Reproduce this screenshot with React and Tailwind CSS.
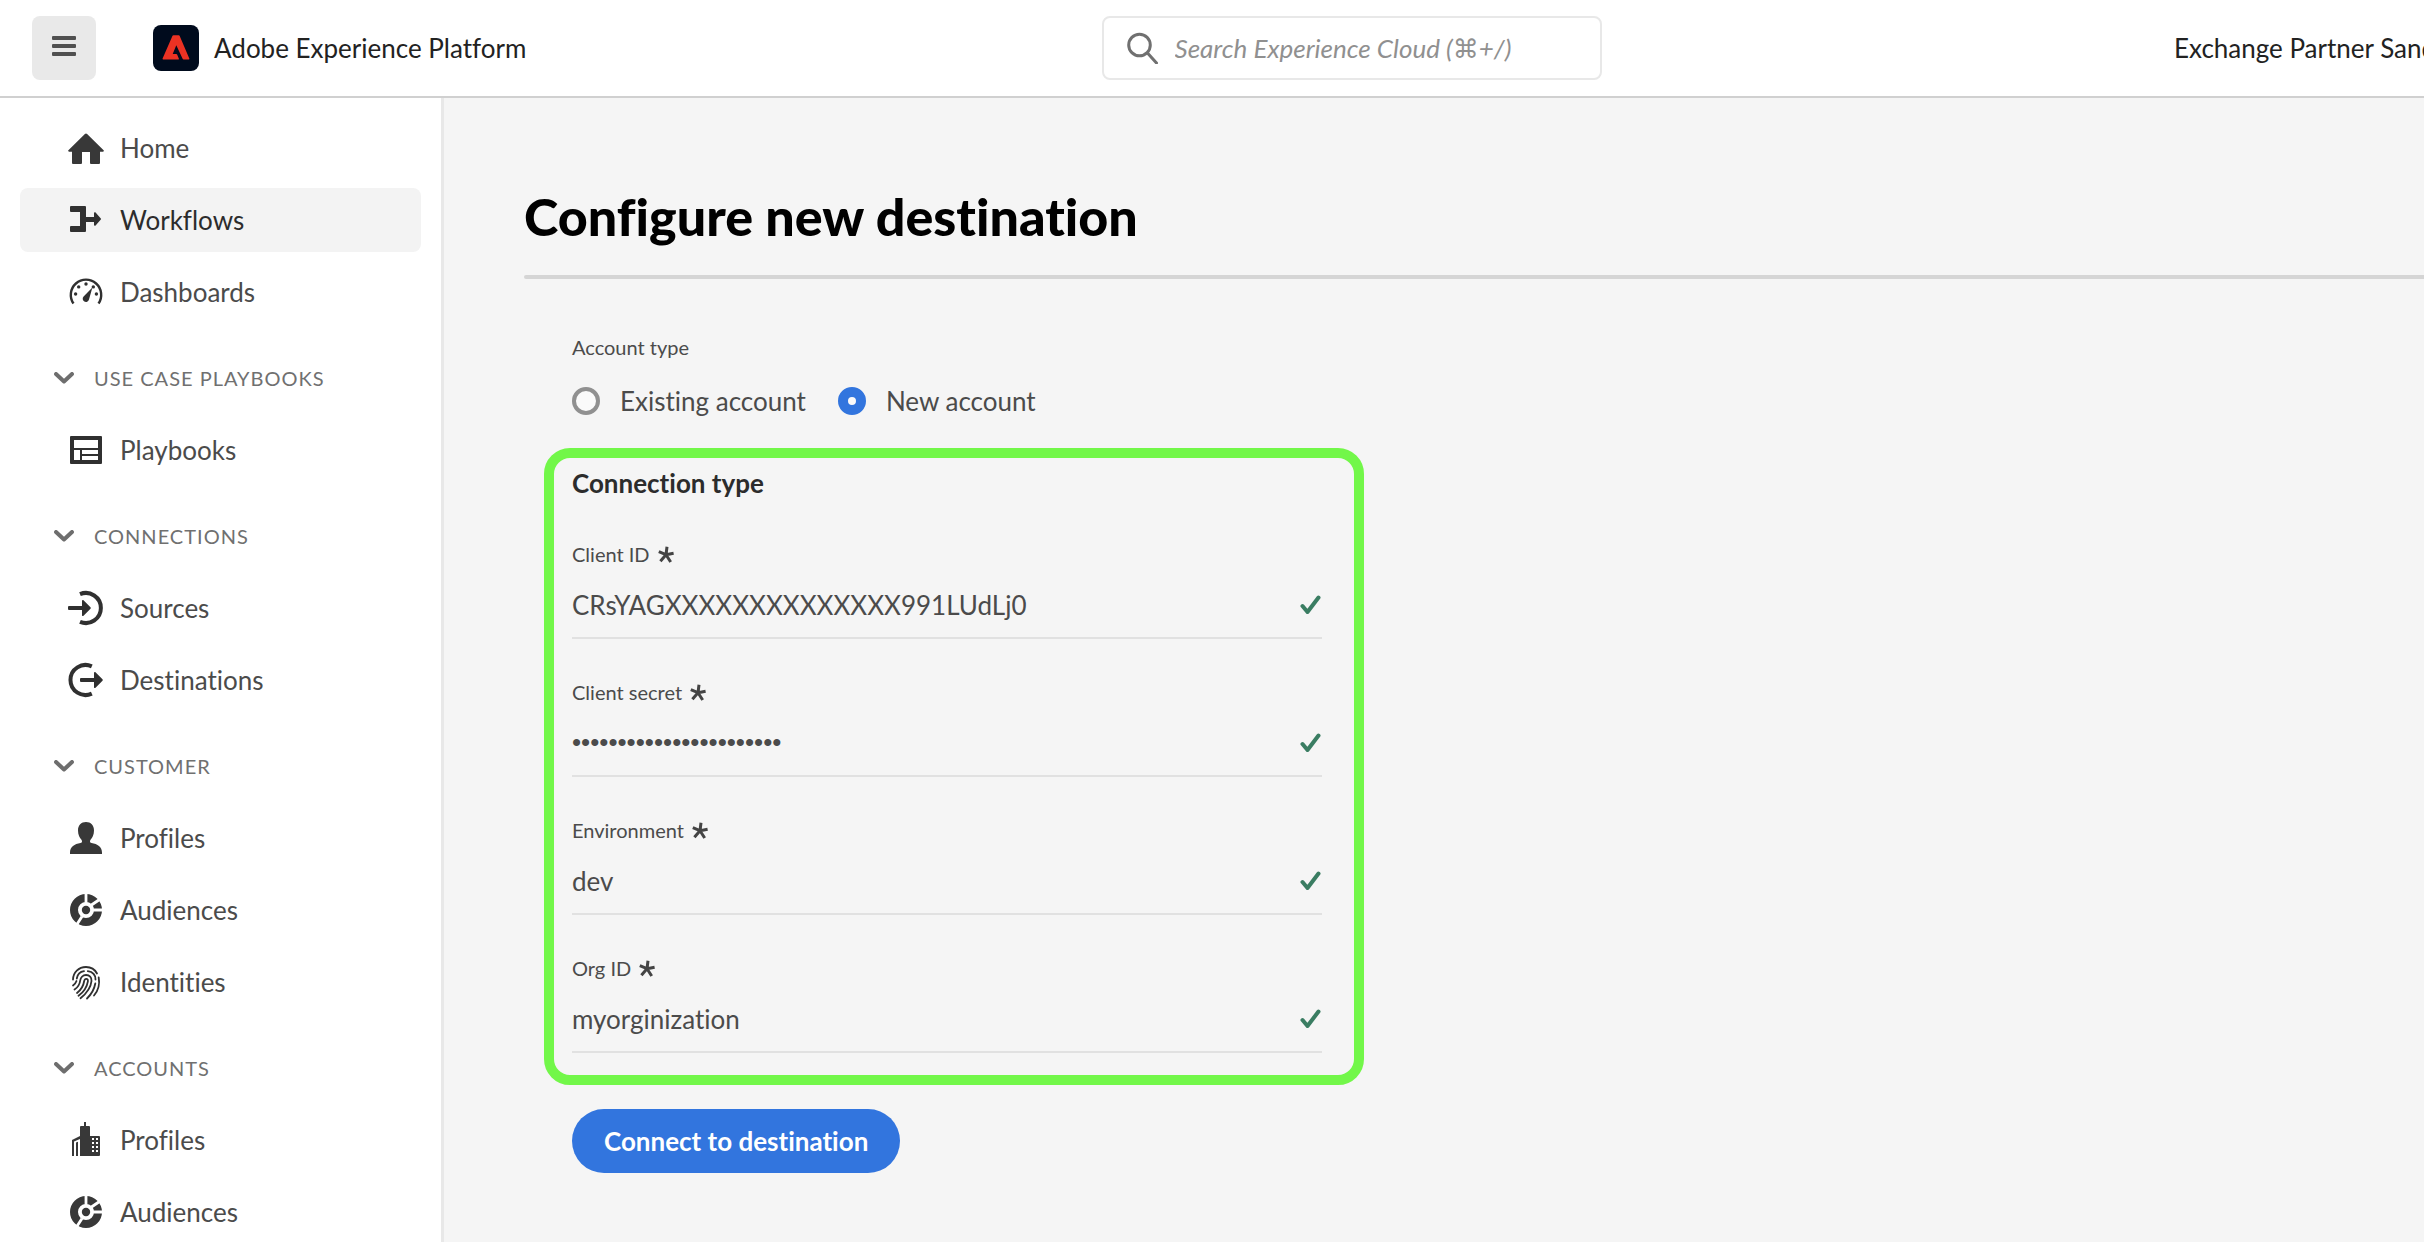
import React from 'react';

const HomeIcon = () => (
  <svg viewBox="0 0 36 36" className="size-9 shrink-0" fill="#383838" aria-hidden="true">
    <path d="M16.9 4a1.6 1.6 0 0 1 2.2 0l16.5 16.2c.6.6.2 1.6-.7 1.6H32V33a1 1 0 0 1-1 1h-8a1 1 0 0 1-1-1V22h-8v11a1 1 0 0 1-1 1H5a1 1 0 0 1-1-1V21.800H1.100c-.9 0-1.300-1-.7-1.600z" />
  </svg>
);

const WorkflowIcon = () => (
  <svg viewBox="0 0 36 36" className="size-9 shrink-0" fill="#303030" aria-hidden="true">
    <path d="M3 4h14a1 1 0 0 1 1 1v10h8v-3.800c0-.9 1-1.300 1.600-.7l5 5.700a1 1 0 0 1 0 1.600l-5 5.700c-.6.6-1.600.2-1.600-.7V20h-8v9a1 1 0 0 1-1 1H3a1 1 0 0 1-1-1v-4a1 1 0 0 1 1-1h9V10H3a1 1 0 0 1-1-1V5a1 1 0 0 1 1-1z" />
  </svg>
);

const GaugeIcon = () => (
  <svg viewBox="0 0 36 36" className="size-9 shrink-0" fill="#303030" aria-hidden="true">
    <path d="M5.500 29.500A15.200 15.200 0 1 1 30.500 29.500" fill="none" stroke="#303030" strokeWidth="2.400" />
    <circle cx="7.600" cy="20" r="1.700" />
    <circle cx="10.700" cy="12.900" r="1.700" />
    <circle cx="18" cy="10" r="1.700" />
    <circle cx="25.300" cy="12.900" r="1.700" />
    <circle cx="28.400" cy="20" r="1.700" />
    <path d="M24.400 13.400 21 25.500a3.200 3.200 0 1 1-5.400-3z" />
  </svg>
);

const PlaybookIcon = () => (
  <svg viewBox="0 0 36 36" className="size-9 shrink-0" fill="#303030" aria-hidden="true">
    <path fillRule="evenodd" d="M3 4h30a1 1 0 0 1 1 1v26a1 1 0 0 1-1 1H3a1 1 0 0 1-1-1V5a1 1 0 0 1 1-1zM6 8v8h24V8zM6 18v10h6V18zM14 18v4h16v-4zM14 24v4h16v-4z" />
  </svg>
);

const SourceIcon = () => (
  <svg viewBox="0 0 36 36" className="size-9 shrink-0" fill="#303030" aria-hidden="true">
    <path d="M12 4.200A15 15 0 1 1 12 31.800" fill="none" stroke="#303030" strokeWidth="4" />
    <path d="M1 16h13v-5.200c0-.8.9-1.200 1.500-.6l7 7.100a1 1 0 0 1 0 1.400l-7 7.100c-.6.6-1.500.2-1.500-.6V20H1a1 1 0 0 1-1-1v-2a1 1 0 0 1 1-1z" />
  </svg>
);

const DestinationIcon = () => (
  <svg viewBox="0 0 36 36" className="size-9 shrink-0" fill="#303030" aria-hidden="true">
    <path d="M23.800 4.400A15 15 0 1 0 23.800 31.600" fill="none" stroke="#303030" strokeWidth="4" />
    <path d="M13 16h13v-5.200c0-.8.9-1.200 1.500-.6l7 7.100a1 1 0 0 1 0 1.400l-7 7.100c-.6.6-1.500.2-1.500-.6V20H13a1 1 0 0 1-1-1v-2a1 1 0 0 1 1-1z" />
  </svg>
);

const UserIcon = () => (
  <svg viewBox="0 0 36 36" className="size-9 shrink-0" fill="#383838" aria-hidden="true">
    <path d="M18 2c4.800 0 8 3.400 8 8.400 0 4.200-1.700 7.200-3.300 9-.5.6-.7 1.200-.7 1.900 0 .9.500 1.600 1.500 1.800C29.500 24 34 27 34 32.500V34H2v-1.500C2 27 6.500 24 12.500 23.100c1-.2 1.500-.9 1.500-1.800 0-.7-.2-1.300-.7-1.900-1.600-1.800-3.300-4.800-3.300-9C10 5.400 13.200 2 18 2z" />
  </svg>
);

const AudienceIcon = () => (
  <svg viewBox="0 0 36 36" className="size-9 shrink-0" aria-hidden="true">
    <circle cx="18" cy="18" r="12" fill="none" stroke="#383838" strokeWidth="8" />
    <path d="M18 11V1M22 14 33 6.500M25 18h10M14 24.500 8.500 33" stroke="#fff" strokeWidth="2.800" />
    <circle cx="18" cy="18" r="4.200" fill="#383838" />
  </svg>
);

const FingerprintIcon = () => (
  <svg viewBox="0 0 36 36" className="size-9 shrink-0" fill="none" stroke="#303030" strokeWidth="1.800" strokeLinecap="round" aria-hidden="true">
    <path d="M5 15.500C5.200 8.500 10.500 3 18 3c4.800 0 8.800 2.200 11 6.500" />
    <path d="M30.700 13.500c1.200 6.500-.8 13.500-4.700 18" />
    <path d="M8.800 14.500C9.500 10.500 12 7.700 16 7.200M19.800 7.200C25 8 27.500 11.500 27.500 15.500" />
    <path d="M5 21.500c2-1.500 3-3 3.500-4.500" />
    <path d="M6.500 25.500C10.500 23 11.800 20 12.200 16.500 12.600 13.300 15 11 18 11c3.500 0 5.800 2.500 5.500 6-.6 6.500-4.500 12-11 17.300" />
    <path d="M27.300 19.500c-1 5.500-3.500 10.300-8.300 15" />
    <path d="M9 29c4.500-3.500 6.500-7.500 7.200-12 .3-1.500 1-2.200 2-2.200 1.300 0 1.900 1 1.700 2.500-1 6-4 10.500-9.400 14.500" />
  </svg>
);

const BuildingIcon = () => (
  <svg viewBox="0 0 36 36" className="size-9 shrink-0" fill="#383838" aria-hidden="true">
    <path fillRule="evenodd" d="M16 0h2v4h3a1 1 0 0 1 1 1v9h9a1 1 0 0 1 1 1v18a1 1 0 0 1-1 1H12V17l-6 2.500V34H4V18l8-4V5a1 1 0 0 1 1-1h3zM8 20.500l2-.8V34H8zM24 16v2h2v-2zM28 16v2h2v-2zM24 20v2h2v-2zM28 20v2h2v-2zM24 24v2h2v-2zM28 24v2h2v-2zM24 28v2h2v-2zM28 28v2h2v-2z" />
  </svg>
);

const AdobeLogo = () => (
  <svg viewBox="0 0 46 46" className="size-[46px] shrink-0" aria-hidden="true">
    <rect width="46" height="46" rx="8" fill="#000b1d" />
    <path fill="#eb3223" d="M20.500 10.200h5.200c.5 0 .8.200 1 .7l9.600 22.600c.2.500 0 .9-.5.900h-5.200c-.5 0-.8-.2-1-.6L23.300 20.300 19.700 29h3.600c.4 0 .6.200.8.500l1.800 4.200c.1.400 0 .7-.4.700H10c-.4 0-.6-.3-.4-.8L19.400 11c.2-.5.500-.8 1.100-.8z" />
  </svg>
);

const Chevron = () => (
  <svg viewBox="0 0 20 12" className="h-3 w-5 shrink-0" fill="none" stroke="#6e6e6e" strokeWidth="4" strokeLinecap="round" strokeLinejoin="round" aria-hidden="true">
    <path d="M2 2l8 7.500L18 2" />
  </svg>
);

const Checkmark = () => (
  <svg viewBox="0 0 22 20" className="h-5 w-[22px] shrink-0" fill="none" stroke="#3a7d62" strokeWidth="4" strokeLinecap="round" strokeLinejoin="round" aria-hidden="true">
    <path d="M2.500 11l5 6L18.500 2.500" />
  </svg>
);

const Asterisk = () => (
  <svg viewBox="0 0 16 17" className="h-[17px] w-4 shrink-0" stroke="#444" strokeWidth="3" aria-hidden="true">
    <path d="M8 8.700 9 .8M8 8.700 15.600 7.200M8 8.700 12.700 16M8 8.700 2.400 15.200M8 8.700.8 5.600" />
  </svg>
);

const NAV = [
  {
    items: [
      { label: 'Home', Icon: HomeIcon },
      { label: 'Workflows', Icon: WorkflowIcon, active: true },
      { label: 'Dashboards', Icon: GaugeIcon },
    ],
  },
  { title: 'USE CASE PLAYBOOKS', items: [{ label: 'Playbooks', Icon: PlaybookIcon }] },
  {
    title: 'CONNECTIONS',
    items: [
      { label: 'Sources', Icon: SourceIcon },
      { label: 'Destinations', Icon: DestinationIcon },
    ],
  },
  {
    title: 'CUSTOMER',
    items: [
      { label: 'Profiles', Icon: UserIcon },
      { label: 'Audiences', Icon: AudienceIcon },
      { label: 'Identities', Icon: FingerprintIcon },
    ],
  },
  {
    title: 'ACCOUNTS',
    items: [
      { label: 'Profiles', Icon: BuildingIcon },
      { label: 'Audiences', Icon: AudienceIcon },
    ],
  },
];

function Header() {
  return (
    <header className="flex h-[98px] shrink-0 items-center justify-between border-b-2 border-[#d0d0d0] bg-white text-[26px] leading-8 text-[#222]">
      <div className="flex w-[529px] shrink-0 items-center pl-8">
        <button type="button" aria-label="Menu" className="flex size-16 items-center justify-center rounded-lg bg-[#e9e9e9]">
          <svg viewBox="0 0 24 20" className="mb-1 h-5 w-6" fill="#505050" aria-hidden="true">
            <rect width="24" height="4" rx="1" />
            <rect y="8" width="24" height="4" rx="1" />
            <rect y="16" width="24" height="4" rx="1" />
          </svg>
        </button>
        <a href="#platform" className="ml-[57px] flex items-center gap-[15px] whitespace-nowrap">
          <AdobeLogo />
          Adobe Experience Platform
        </a>
      </div>
      <label className="flex h-16 w-[500px] items-center gap-4 rounded-lg border-2 border-[#e8e8e8] pl-[23px] pr-4">
        <svg viewBox="0 0 32 32" className="size-8 shrink-0" fill="none" stroke="#707070" strokeWidth="3" strokeLinecap="round" aria-hidden="true">
          <circle cx="12.500" cy="13" r="10.800" />
          <path d="M20.500 21 29.500 31" />
        </svg>
        <input
          type="search"
          aria-label="Search"
          placeholder="Search Experience Cloud (⌘+/)"
          className="h-full min-w-0 flex-1 bg-transparent italic outline-none placeholder:text-[#909090]"
        />
      </label>
      <div className="w-[250px] overflow-hidden whitespace-nowrap">Exchange Partner Sandbox</div>
    </header>
  );
}

function Sidebar() {
  return (
    <nav className="flex w-[444px] shrink-0 flex-col gap-[22px] overflow-hidden border-r-[3px] border-[#e8e8e8] bg-white pt-[18px] pr-5 pl-5">
      {NAV.map((section, i) => (
        <div key={i} className="flex shrink-0 flex-col gap-2">
          {section.title && (
            <button type="button" className="flex h-16 shrink-0 items-center gap-5 pl-[34px] text-xl tracking-wider text-[#707070]">
              <Chevron />
              {section.title}
            </button>
          )}
          {section.items.map(({ label, Icon, active }) => (
            <a
              key={label}
              href={'#' + label.toLowerCase()}
              className={
                'flex h-16 shrink-0 items-center gap-4 rounded-lg pl-12 text-[26px] leading-8 ' +
                (active ? 'bg-[#f3f3f3] text-[#2c2c2c]' : 'text-[#4b4b4b]')
              }
            >
              <Icon />
              {label}
            </a>
          ))}
        </div>
      ))}
    </nav>
  );
}

function Radio({ label, checked }) {
  return (
    <label className="flex items-center gap-5">
      <input
        type="radio"
        name="account"
        defaultChecked={checked}
        className="size-7 shrink-0 appearance-none rounded-full border-4 border-[#909090] bg-[#fafafa] checked:border-[10px] checked:border-[#3275de]"
      />
      {label}
    </label>
  );
}

function Field({ id, label, value, type = 'text' }) {
  return (
    <div>
      <label htmlFor={id} className="flex items-center gap-2 text-xl leading-7">
        {label}
        <Asterisk />
      </label>
      <div className="flex h-[71px] items-center border-b-2 border-[#e1e1e1] pt-1">
        <input
          id={id}
          type={type}
          defaultValue={value}
          className={
            'h-10 min-w-0 flex-1 bg-transparent text-[26px] leading-8 outline-none ' +
            (type === 'password' ? "font-['Liberation_Sans',sans-serif]" : '')
          }
        />
        <Checkmark />
      </div>
    </div>
  );
}

export default function App() {
  return (
    <div className="flex h-screen flex-col overflow-hidden bg-[#f5f5f5] font-['Lato','DejaVu_Sans',sans-serif] [font-variant-ligatures:no-common-ligatures]">
      <Header />
      <div className="flex min-h-0 flex-1">
        <Sidebar />
        <main className="min-w-0 flex-1 overflow-hidden pt-[86px] pl-20 text-[#4b4b4b]">
          <h1 className="text-[52px] leading-[64px] font-black text-black">Configure new destination</h1>
          <hr className="mt-[27px] h-1 rounded-l-sm border-0 bg-[#d5d5d5]" />
          <form className="pt-[54px] pl-5">
            <fieldset className="pl-7">
              <legend className="text-xl leading-7">Account type</legend>
              <div className="mt-6 flex gap-8 text-[26px] leading-8">
                <Radio label="Existing account" />
                <Radio label="New account" checked />
              </div>
            </fieldset>
            <section className="mt-[31px] w-[820px] max-w-full rounded-[26px] border-[10px] border-[#72f749] pt-[9px] pr-8 pb-[22px] pl-[18px]">
              <h2 className="text-[26px] leading-8 font-bold text-[#2c2c2c]">Connection type</h2>
              <div className="mt-[41px] flex flex-col gap-[39px]">
                <Field id="client-id" label="Client ID" value="CRsYAGXXXXXXXXXXXXXX991LUdLj0" />
                <Field id="client-secret" label="Client secret" type="password" value="abcdefghijklmnopqrstuvw" />
                <Field id="environment" label="Environment" value="dev" />
                <Field id="org-id" label="Org ID" value="myorginization" />
              </div>
            </section>
            <button type="button" className="mt-6 ml-7 h-16 rounded-full bg-[#3275de] px-8 text-[26px] leading-8 font-bold text-white">
              Connect to destination
            </button>
          </form>
        </main>
      </div>
    </div>
  );
}
